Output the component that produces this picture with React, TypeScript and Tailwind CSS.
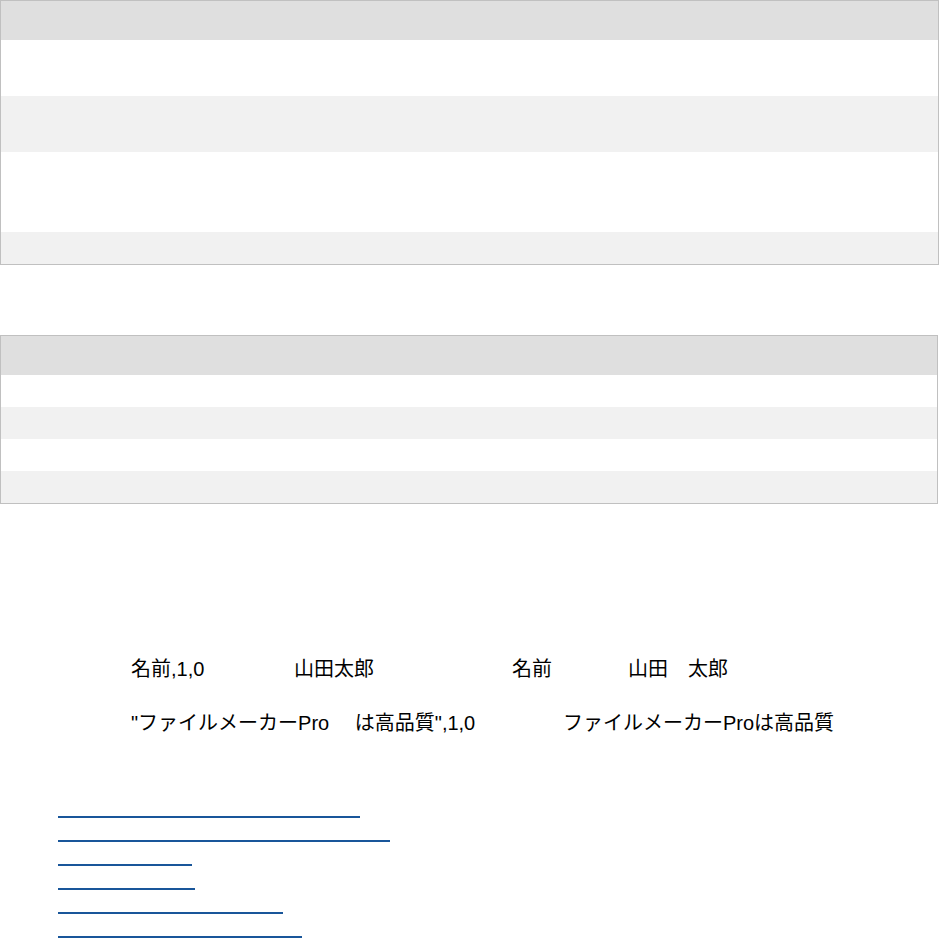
import React from "react";

const font = { fontFamily: '"Liberation Sans", Arial, "Noto Sans CJK JP", sans-serif' };

function Table1() {
  return (
    <div className="w-[939px] border border-[#c0c0c0]">
      <div className="h-[39px] bg-[#dfdfdf]" />
      <div className="h-[56px] bg-white" />
      <div className="h-[56px] bg-[#f1f1f1]" />
      <div className="h-[80px] bg-white" />
      <div className="h-[32px] bg-[#f1f1f1]" />
    </div>
  );
}

function Table2() {
  return (
    <div className="w-[938px] border border-[#c0c0c0]">
      <div className="h-[39px] bg-[#dfdfdf]" />
      <div className="h-[32px] bg-white" />
      <div className="h-[32px] bg-[#f1f1f1]" />
      <div className="h-[32px] bg-white" />
      <div className="h-[32px] bg-[#f1f1f1]" />
    </div>
  );
}

const links = [302, 332, 134, 137, 225, 244];

export default function App() {
  return (
    <div className="w-[939px] h-[939px] bg-white overflow-hidden text-black" style={font}>
      <Table1 />
      <div className="h-[70px]" />
      <Table2 />
      <div className="h-[153px]" />
      <div className="flex flex-col gap-[30px] text-[20px] leading-[24px] pl-[131px]">
        <div className="flex">
          <span className="w-[163px]">名前,1,0</span>
          <span className="w-[218px]">山田太郎</span>
          <span className="w-[116px]">名前</span>
          <span>山田　太郎</span>
        </div>
        <div className="flex">
          <span className="w-[432px]">"ファイルメーカーPro　 は高品質",1,0</span>
          <span>ファイルメーカーProは高品質</span>
        </div>
      </div>
      <div className="h-[59px]" />
      <ul className="flex flex-col pl-[58px]">
        {links.map((w, i) => (
          <li key={i} className="h-[24px] flex items-end">
            <a href="#" className="block h-[2px] bg-[#19569a]" style={{ width: w }} />
          </li>
        ))}
      </ul>
    </div>
  );
}
